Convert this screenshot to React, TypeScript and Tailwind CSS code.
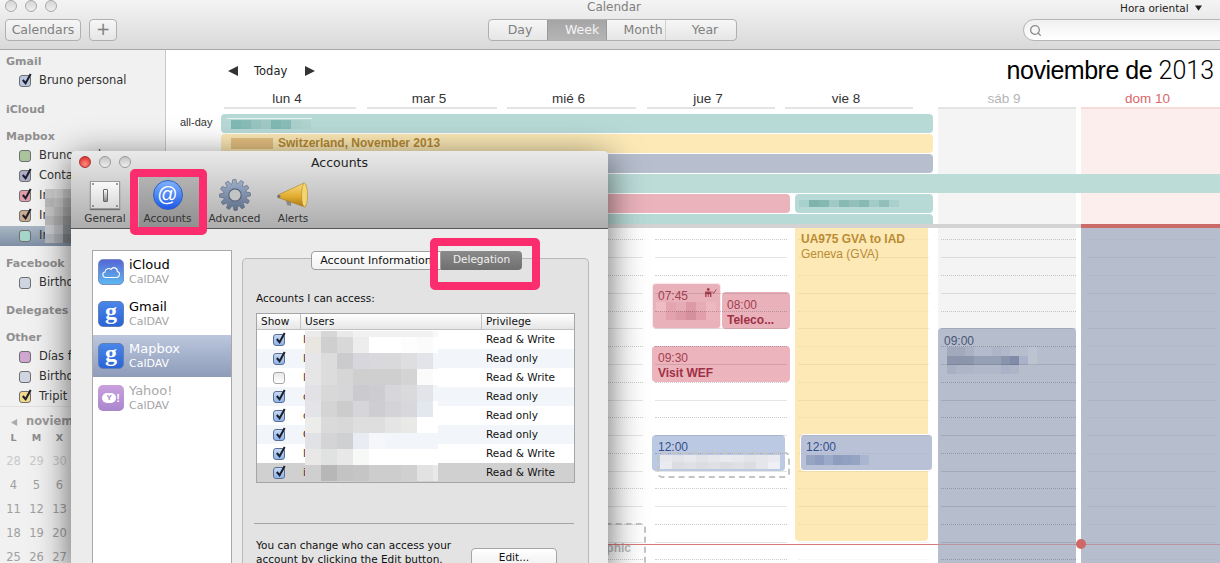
import React from 'react';
import { Search } from 'lucide-react';

const sidebar = "font-['DejaVu_Sans',sans-serif]";

function Mosaic({ rows, w, h, firstH, lastW, className }: { rows: string[][]; w: number; h: number; firstH?: number; lastW?: number; className?: string }) {
  return (
    <div className={className}>
      {rows.map((row, i) => (
        <div key={i} className="flex">
          {row.map((c, j) => (
            <div
              key={j}
              style={{
                width: lastW && j === row.length - 1 ? lastW : w,
                height: firstH && i === 0 ? firstH : h,
                background: c,
              }}
            />
          ))}
        </div>
      ))}
    </div>
  );
}

function Check({ className }: { className?: string }) {
  return (
    <svg viewBox="0 0 14 14" className={className}>
      <path d="M3 7.5 L6 11 L11.5 1" fill="none" stroke="#1c1f2b" strokeWidth="2.2" />
    </svg>
  );
}

function CalBox({ color, checked }: { color: string; checked?: boolean }) {
  return (
    <div
      className="relative w-[12px] h-[12px] shrink-0 rounded-[3px] border border-[#6f6f6f]"
      style={{ background: color }}
    >
      {checked && <Check className="absolute -top-[3px] left-0 w-[13px] h-[13px]" />}
    </div>
  );
}

function SideHead({ label, className }: { label: string; className: string }) {
  return <div className={`h-[19px] pl-[6px] leading-[19px] text-[11px] font-bold text-[#8f8f8f] ${className}`}>{label}</div>;
}

function SideItem({ label, color, checked, selected }: { label: string; color: string; checked?: boolean; selected?: boolean }) {
  return (
    <div className={`h-[20px] pl-[19px] flex items-center gap-[8px] text-[11.5px] text-[#333] whitespace-nowrap ${selected ? 'bg-gradient-to-b from-[#a9b6c4] to-[#7f8fa3]' : ''}`}>
      <CalBox color={color} checked={checked} />
      <span>{label}</span>
    </div>
  );
}

const miniRows = [
  ['28', '29', '30', '31', '1', '2', '3'],
  ['4', '5', '6', '7', '8', '9', '10'],
  ['11', '12', '13', '14', '15', '16', '17'],
  ['18', '19', '20', '21', '22', '23', '24'],
  ['25', '26', '27', '28', '29', '30', '1'],
];

function Sidebar() {
  return (
    <div className={`w-[166px] h-[513px] shrink-0 bg-[#f1f1f1] border-r border-[#c9c9c9] overflow-hidden pt-[2px] ${sidebar}`}>
      <SideHead label="Gmail" className="" />
      <SideItem label="Bruno personal" color="#b9c6e0" checked />
      <SideHead label="iCloud" className="mt-[9px]" />
      <SideHead label="Mapbox" className="mt-[8px]" />
      <SideItem label="Bruno work" color="#a9c49c" />
      <SideItem label="Contacts" color="#adadc8" checked />
      <SideItem label="Invites" color="#e29dab" checked />
      <SideItem label="Internal" color="#c9ab90" checked />
      <SideItem label="Infra" color="#a6d5ca" selected />
      <SideHead label="Facebook" className="mt-[8px]" />
      <SideItem label="Birthdays" color="#cfd6e2" />
      <SideHead label="Delegates" className="mt-[8px]" />
      <SideHead label="Other" className="mt-[8px]" />
      <SideItem label="Días festivos" color="#cfa7d0" />
      <SideItem label="Birthdays" color="#cfd6e2" />
      <SideItem label="Tripit" color="#f3d98b" checked />
      <div className="border-t border-[#e2e2e2] -mt-px" />
      <div className="mt-[7px] pl-[11px] h-[16px] flex items-center gap-[8px] text-[11.5px] font-bold text-[#999]">
        <svg viewBox="0 0 8 8" className="w-[7px] h-[7px]"><path d="M7 0 V8 L0 4 Z" fill="#aaa" /></svg>
        <span>noviembre</span>
      </div>
      <div className="pl-[2px] grid grid-cols-[repeat(7,23px)] text-center text-[9.5px] font-bold text-[#8c8c8c] h-[16px] leading-[16px]">
        {['L', 'M', 'X', 'J', 'V', 'S', 'D'].map((d) => <span key={d}>{d}</span>)}
      </div>
      {miniRows.map((r, i) => (
        <div key={i} className={`pl-[2px] grid grid-cols-[repeat(7,23px)] text-center text-[11.5px] h-[24px] leading-[24px] ${i === 0 ? 'mt-[3px] text-[#c9c9c9]' : 'text-[#a0a0a0]'}`}>
          {r.map((d, j) => <span key={j}>{d}</span>)}
        </div>
      ))}
    </div>
  );
}

function Toolbar() {
  return (
    <div className={`h-[50px] bg-gradient-to-b from-[#f4f4f4] to-[#d9d9d9] border-b border-[#a8a8a8] flex ${sidebar}`}>
      <div className="w-[488px] shrink-0">
        <div className="flex gap-[8px] pl-[5px] h-[19px]">
          {[0, 1, 2].map((i) => (
            <div key={i} className="w-[12px] h-[12px] rounded-full border border-[#a9a9a9] bg-gradient-to-b from-[#d6d6d6] to-[#eeeeee]" />
          ))}
        </div>
        <div className="flex gap-[8px] pl-[5px]">
          <div className="w-[76px] h-[22px] rounded-[4px] border border-[#b0b0b0] bg-gradient-to-b from-[#f6f6f6] to-[#e6e6e6] text-center leading-[20px] text-[12.5px] text-[#808080]">Calendars</div>
          <div className="w-[28px] h-[22px] rounded-[4px] border border-[#b0b0b0] bg-gradient-to-b from-[#f6f6f6] to-[#e6e6e6] text-center leading-[18px] text-[17px] text-[#808080]">+</div>
        </div>
      </div>
      <div className="w-[249px] shrink-0">
        <div className="h-[19px] text-center pl-[3px] text-[12px] leading-[15px] text-[#808080]">Calendar</div>
        <div className="flex h-[22px] rounded-[4px] border border-[#b0b0b0] bg-gradient-to-b from-[#f6f6f6] to-[#e6e6e6] text-[12.5px] text-[#808080] text-center leading-[20px] overflow-hidden">
          <div className="w-[58px] pl-[4px]">Day</div>
          <div className="w-[60px] pl-[10px] bg-gradient-to-b from-[#a5a5a5] to-[#b5b5b5] text-[#f4f4f4] border-x border-[#999]">Week</div>
          <div className="w-[59px] pl-[14px] border-r border-[#d0d0d0] whitespace-nowrap">Month</div>
          <div className="flex-1 pl-[8px]">Year</div>
        </div>
      </div>
      <div className="flex-1 pl-[286px]">
        <div className="h-[19px] pl-[97px] pt-[1px] flex items-start gap-[6px] text-[10.5px] leading-[14px] text-[#222] whitespace-nowrap">
          <span>Hora oriental</span>
          <svg viewBox="0 0 8 6" className="w-[7px] h-[6px] mt-[4px]"><path d="M0 0 H8 L4 6 Z" fill="#222" /></svg>
        </div>
        <div className="w-[210px] h-[22px] rounded-full border border-[#b5b5b5] bg-gradient-to-b from-[#f0f0f0] to-white flex items-center pl-[5px]">
          <Search className="w-[13px] h-[13px] text-[#8a8a8a]" strokeWidth={2.4} />
        </div>
      </div>
    </div>
  );
}

const dayCols = [
  { label: 'lun 4', cls: 'ml-[58px] w-[132px]', line: 'border-[#e4e4e4] text-[#333]' },
  { label: 'mar 5', cls: 'ml-[11px] w-[130px]', line: 'border-[#e4e4e4] text-[#333]' },
  { label: 'mié 6', cls: 'ml-[10px] w-[129px]', line: 'border-[#e4e4e4] text-[#333]' },
  { label: 'jue 7', cls: 'ml-[11px] w-[128px]', line: 'border-[#e4e4e4] text-[#333]' },
  { label: 'vie 8', cls: 'ml-[10px] w-[128px]', line: 'border-[#e4e4e4] text-[#333]' },
  { label: 'sáb 9', cls: 'ml-[25px] w-[138px]', line: 'border-[#e4e4e4] text-[#b5b5b5]' },
  { label: 'dom 10', cls: 'ml-[5px] w-[139px]', line: 'border-[#f5dcd9] text-[#d9686a]' },
];

// hour grid: solid every 35.6px from y=257, dotted half way between
const hourCols = [
  { left: 344, width: 133, faint: false },
  { left: 489, width: 132, faint: false },
  { left: 632, width: 132, faint: true },
  { left: 775, width: 135, faint: false },
  { left: 921, width: 129, faint: true },
];

function HourLines() {
  const lines = [];
  for (let i = 0; i < 10; i++) {
    const solid = 257.3 - 109 + i * 35.55;
    const dotted = solid - 17.9;
    for (const c of hourCols) {
      lines.push(
        <div key={`d${i}${c.left}`} className={`absolute border-t border-dotted ${c.faint ? 'border-black/5' : 'border-black/20'}`} style={{ top: Math.round(dotted), left: c.left, width: c.width }} />,
        <div key={`s${i}${c.left}`} className={`absolute h-px ${c.faint ? 'bg-black/5' : 'bg-black/10'}`} style={{ top: Math.round(solid), left: c.left, width: c.width }} />,
      );
    }
  }
  return <>{lines}</>;
}

function Calendar() {
  return (
    <div className="flex-1 min-w-0 font-['Liberation_Sans',Arial,sans-serif]">
      <div className="h-[38px] flex items-center">
        <div className="ml-[62px] flex items-center text-[12px] text-[#222] mt-[4px]">
          <svg viewBox="0 0 10 10" className="w-[10px] h-[10px]"><path d="M10 0 V10 L0 5 Z" fill="#333" /></svg>
          <span className="ml-[16px] mr-[18px] mt-[2px] font-['DejaVu_Sans',sans-serif] text-[11.5px]">Today</span>
          <svg viewBox="0 0 10 10" className="w-[10px] h-[10px]"><path d="M0 0 V10 L10 5 Z" fill="#333" /></svg>
        </div>
        <div className="ml-auto mr-[6px] mt-[3px] text-[25px] tracking-[-0.5px] text-black whitespace-nowrap">
          noviembre de <span className="font-['Roboto',sans-serif] font-light tracking-[0]">2013</span>
        </div>
      </div>
      <div className="flex h-[21px]">
        {dayCols.map((d) => (
          <div key={d.label} className={`${d.cls} ${d.line} shrink-0 border-b-2 pr-[6px] text-center text-[13.5px] leading-[21px]`}>{d.label}</div>
        ))}
      </div>
      <div className="relative h-[454px] overflow-hidden text-[12px]">
        <div className="absolute left-[772px] top-0 w-[143px] h-[454px] bg-[#f4f4f4]" />
        <div className="absolute left-[910px] top-0 w-[5px] h-[454px] bg-white" />
        <div className="absolute left-[915px] top-0 w-[139px] h-[115px] bg-[#fbeeec]" />
        <div className="absolute left-[915px] top-[119px] w-[139px] h-[335px] bg-[#b6bdcc]" />

        <div className="absolute left-[14px] top-[5px] text-[11px] text-[#333]">all-day</div>
        <div className="absolute left-[55px] top-[5px] w-[712px] h-[19px] rounded-[4px] bg-[#b8dad6]">
          <div className="absolute left-[6px] top-[4px] w-[85px] h-[1px] bg-[#e4f2f0]" />
          <Mosaic className="absolute left-[10px] top-[6px]" w={10} h={9} rows={[['#82b9b4', '#88bcb7', '#98c5c1', '#a0cac6', '#82b9b4', '#8abdb8', '#acd1cd', '#b0d4d0']]} />
        </div>
        <div className="absolute left-[55px] top-[25px] w-[712px] h-[19px] rounded-[4px] bg-[#fce9b6] pl-[57px] text-[12px] font-bold leading-[19px] text-[#b58a33]">
          <div className="absolute left-[10px] top-[4px] w-[42px] h-[11px] bg-[#e6c282]" />
          Switzerland, November 2013
        </div>
        <div className="absolute left-[55px] top-[45px] w-[712px] h-[19px] rounded-[4px] bg-[#b7bfce]" />
        <div className="absolute left-[55px] top-[65px] w-[999px] h-[19px] bg-[#b8dad6]/95" />
        <div className="absolute left-[55px] top-[85px] w-[569px] h-[19px] rounded-[4px] bg-[#ebb3bc]" />
        <div className="absolute left-[629px] top-[85px] w-[138px] h-[19px] rounded-[4px] bg-[#b8dad6]">
          <Mosaic className="absolute left-[4px] top-[6px]" w={10} h={7} rows={[['#a8d0cc', '#7fb3ad', '#86b8b2', '#a0c9c5', '#88b9b4', '#94c0bb', '#88b9b4', '#a2cbc7', '#92bfba', '#a9d0cc']]} />
        </div>
        <div className="absolute left-[55px] top-[105px] w-[712px] h-[14px] rounded-t-[4px] bg-[#b8dad6]" />

        <div className="absolute left-[629px] top-[115px] w-[133px] h-[317px] rounded-[4px] bg-[#fce9b6] pt-[8px] pl-[6px] leading-[15px] text-[#bb8c34]">
          <div className="font-bold text-[12px]">UA975 GVA to IAD</div>
          <div className="text-[12px]">Geneva (GVA)</div>
        </div>
        <div className="absolute left-0 top-[115px] w-[915px] h-[4px] bg-[#d3d3d3]" />
        <div className="absolute left-[915px] top-[115px] w-[139px] h-[4px] bg-[#cc6a68]" />

        <div className="absolute left-[486px] top-[174px] w-[69px] h-[46px] rounded-[4px] bg-[#e9b2bb] border border-white/70 pl-[5px] pt-[5px] text-[#a43f50] leading-[15px]">
          <div className="text-[12px]">07:45</div>
          <svg viewBox="0 0 14 10" className="absolute right-[3px] top-[4px] w-[13px] h-[9px]">
            <circle cx="4.5" cy="1.7" r="1.6" fill="#a43f50" />
            <path d="M1 4 H8 V10 H6.5 V7 H5 V10 H4 V7 H2.5 V10 H1 Z" fill="#a43f50" />
            <path d="M9 4 L10.5 6 L13.5 1.5" fill="none" stroke="#a43f50" strokeWidth="1" />
          </svg>
          <Mosaic className="absolute left-[3px] top-[18px]" w={10} h={9} rows={[['#efbcc4', '#e5a5b0', '#e7abb5', '#dd9aa6', '#e7abb5', '#eeb8c1'], ['#e9b2bb', '#e2a3ae', '#dd9aa6', '#d68f9c', '#e29fab', '#ebb3bc']]} />
        </div>
        <div className="absolute left-[556px] top-[183px] w-[68px] h-[37px] rounded-[4px] bg-[#e9b2bb] pl-[5px] pt-[6px] text-[#a43f50] leading-[15px] whitespace-nowrap">
          <div className="text-[12px]">08:00</div>
          <div className="font-bold text-[12px] text-[#9e3146]">Teleco...</div>
        </div>
        <div className="absolute left-[486px] top-[237px] w-[138px] h-[36px] rounded-[4px] bg-[#ecb4bc] pl-[6px] pt-[5px] text-[#a43f50] leading-[15px]">
          <div className="text-[12px]">09:30</div>
          <div className="font-bold text-[12px] text-[#9e3146]">Visit WEF</div>
        </div>
        <div className="absolute left-[486px] top-[326px] w-[133px] h-[36px] rounded-[4px] bg-[#bcc9e2] pl-[6px] pt-[5px] leading-[15px] text-[#35508e]">12:00</div>
        <div className="absolute left-[634px] top-[325px] w-[133px] h-[37px] rounded-[4px] bg-[#b8c1d6] border border-white pl-[5px] pt-[5px] leading-[15px] text-[#35508e]">
          12:00
          <Mosaic className="absolute left-[5px] top-[20px]" w={9} h={10} rows={[['#97a5c3', '#8f9ec0', '#9caaca', '#8e9cbe', '#90a0c0', '#95a4c2', '#aab6cf']]} />
        </div>
        <div className="absolute left-[772px] top-[219px] w-[138px] h-[235px] rounded-t-[4px] bg-[#b6bdcc] pl-[6px] pt-[6px] text-[#4a5678] leading-[15px]">
          09:00
          <Mosaic className="absolute left-[9px] top-[19px]" w={9} h={9} rows={[['#a1a9bd', '#a1a9bd', '#a9b1c3', '#b2bacb', '#b2bacb', '#adb5c6', '#b0b8c9', '#b6bdcc', '#b6bdcc', '#bcc3d1'], ['#8b96ad', '#8b96ad', '#8b96ad', '#95a0b5', '#95a0b5', '#95a0b5', '#8893ac', '#7f8ba8', '#a9b2c8', '#bcc3d1'], ['#a8b0c3', '#adb5c7', '#adb5c7', '#b0b8c9', '#b0b8c9', '#b0b8c9', '#a9b2c6', '#adb5c7', '#b6bdcc', '#b6bdcc']]} />
        </div>

        <HourLines />

        <div className="absolute left-[491px] top-[343px] w-[133px] h-[26px] rounded-[5px] border-2 border-dashed border-[#c4c4c4] p-[1px]">
          <Mosaic w={12} h={7} rows={[['#e6e8ee', '#e2e4ea', '#e6e8ee', '#e0e2e8', '#e4e6ec', '#e8eaf0', '#e6e8ee', '#e2e4ea', '#e4e6ec', '#e8eaf0'], ['#e9ebf0', '#dcdde2', '#dfe0e5', '#dcdde2', '#dee0e4', '#dcdde2', '#dee0e4', '#dcdde2', '#e4e6ec', '#eef0f5']]} />
        </div>
        <div className="absolute left-[344px] top-[414px] w-[136px] h-[40px] rounded-t-[5px] border-2 border-b-0 border-dashed border-[#c4c4c4] pt-[16px] pr-[13px] text-right font-bold text-[12px] leading-[15px] text-[#bdbdbd]">
          Infographic
        </div>

        <div className="absolute left-[442px] top-[435px] w-[330px] h-px bg-[#d97a7a]" />
        <div className="absolute left-[772px] top-[435px] w-[282px] h-px bg-[#b9939f]" />
        <div className="absolute left-[910px] top-[430px] w-[10px] h-[10px] rounded-full bg-[#cf6766]" />
      </div>
    </div>
  );
}

function Gear() {
  const pts: string[] = [];
  const teeth = 12;
  for (let i = 0; i < teeth; i++) {
    const a = (i / teeth) * Math.PI * 2;
    const s = (Math.PI * 2) / teeth;
    const seq: [number, number][] = [[11.5, -0.5], [15.5, -0.28], [15.5, 0.12], [11.5, 0.3]];
    for (const [r, o] of seq) {
      pts.push(`${16 + r * Math.cos(a + o * s)},${16 + r * Math.sin(a + o * s)}`);
    }
  }
  return (
    <svg viewBox="0 0 32 32" className="w-[32px] h-[32px]">
      <defs>
        <linearGradient id="gearFill" x1="0" y1="0" x2="0" y2="1">
          <stop offset="0" stopColor="#9fb0cb" />
          <stop offset="1" stopColor="#5f6f8a" />
        </linearGradient>
      </defs>
      <polygon points={pts.join(' ')} fill="url(#gearFill)" stroke="#55627a" strokeWidth="0.6" />
      <circle cx="16" cy="16" r="6.2" fill="#c4c4c4" stroke="#56637b" strokeWidth="1.2" />
    </svg>
  );
}

function Megaphone() {
  return (
    <svg viewBox="0 0 32 26" className="w-[32px] h-[26px]">
      <defs>
        <linearGradient id="hornFill" x1="0" y1="0" x2="0" y2="1">
          <stop offset="0" stopColor="#f7dc82" />
          <stop offset="0.55" stopColor="#e2ad2f" />
          <stop offset="1" stopColor="#a97a17" />
        </linearGradient>
      </defs>
      <path d="M9 18 L10 23 L14 24 L14 20 Z" fill="#8a8a8a" />
      <path d="M1 13 L27 1 C29 6 29 19 28 25 L2 16 Z" fill="url(#hornFill)" stroke="#9a7418" strokeWidth="0.5" />
      <ellipse cx="27.5" cy="13" rx="3" ry="12" fill="#f3d372" stroke="#a97a17" strokeWidth="0.5" />
      <circle cx="1.8" cy="14.5" r="1.7" fill="#777" />
    </svg>
  );
}

function SwitchIcon() {
  return (
    <div className="relative w-[30px] h-[28px] bg-gradient-to-b from-[#fafafa] to-[#d8d8d8] border border-[#9a9a9a] shadow-[0_1px_1px_rgba(0,0,0,0.4)]">
      <div className="absolute left-[1px] top-[1px] w-[2px] h-[2px] rounded-full bg-[#777]" />
      <div className="absolute right-[1px] top-[1px] w-[2px] h-[2px] rounded-full bg-[#777]" />
      <div className="absolute left-[1px] bottom-[1px] w-[2px] h-[2px] rounded-full bg-[#777]" />
      <div className="absolute right-[1px] bottom-[1px] w-[2px] h-[2px] rounded-full bg-[#777]" />
      <div className="absolute left-[12px] top-[7px] w-[5px] h-[13px] rounded-[1px] bg-gradient-to-b from-[#fff] to-[#888] border border-[#666]" />
    </div>
  );
}

function AtIcon() {
  return (
    <div className="w-[30px] h-[30px] rounded-full bg-gradient-to-b from-[#7fb0fa] to-[#1e58e6] border border-[#2f5fc0] flex items-center justify-center text-[20px] leading-none text-white font-['Liberation_Sans',sans-serif]">
      <span className="-mt-[2px]">@</span>
    </div>
  );
}

function CloudIcon() {
  return (
    <div className="w-[26px] h-[26px] shrink-0 rounded-[5px] bg-gradient-to-b from-[#5566d6] to-[#5cb8ee] border border-[#7b8cc8] flex items-center justify-center">
      <svg viewBox="0 0 24 16" className="w-[20px] h-[14px]">
        <path d="M6 14.5 C1.5 14.5 0.8 9 4.8 8 C5 4 10 2.5 12 5 C14.5 1 20 3 19.5 7.5 C23.5 8.5 23 14.5 18.5 14.5 Z" fill="none" stroke="#fff" strokeWidth="1.3" />
      </svg>
    </div>
  );
}

function GoogleIcon() {
  return (
    <div className="w-[26px] h-[26px] shrink-0 rounded-[5px] bg-gradient-to-b from-[#4a86e8] to-[#2a63d8] border border-[#5f7fb5] flex items-center justify-center text-[24px] leading-none text-white font-['Liberation_Serif',serif] font-bold">
      <span className="-mt-[6px]">g</span>
    </div>
  );
}

function YahooIcon() {
  return (
    <div className="w-[26px] h-[26px] shrink-0 rounded-[5px] bg-gradient-to-b from-[#c9a0de] to-[#a987cd] flex items-center justify-center font-['Liberation_Sans',sans-serif] font-bold text-white">
      <span className="w-[14px] h-[10px] rounded-full bg-white text-[#a987cd] text-[8px] leading-[10px] text-center">Y</span>
      <span className="text-[11px] leading-none">!</span>
    </div>
  );
}

const accounts = [
  { name: 'iCloud', icon: <CloudIcon /> },
  { name: 'Gmail', icon: <GoogleIcon /> },
  { name: 'Mapbox', icon: <GoogleIcon />, selected: true },
  { name: 'Yahoo!', icon: <YahooIcon />, muted: true },
];

const delegates = [
  { letter: 'l', show: true, priv: 'Read & Write' },
  { letter: 'l', show: true, priv: 'Read only' },
  { letter: 'l', show: false, priv: 'Read & Write' },
  { letter: 'c', show: true, priv: 'Read only' },
  { letter: 'c', show: true, priv: 'Read only' },
  { letter: 'C', show: true, priv: 'Read only' },
  { letter: 'l', show: true, priv: 'Read & Write' },
  { letter: 'i', show: true, priv: 'Read & Write' },
];

const userBlur = [
  ['#ebebeb', '#d6d6d6', '#e9e9e9', '#f1f1f1', '#f1f1f1', '#f1f1f1', '#f1f1f1', '#f1f1f1', '#f8f8f8'],
  ['#e9e5e1', '#cfcfcf', '#d8d8d8', '#ededed', '#ffffff', '#ffffff', '#fdfdfd', '#fbfbfb', '#ffffff'],
  ['#e6e6e9', '#dcdcdc', '#cbcbce', '#d6d6dc', '#d9d9dd', '#d9d9dc', '#dedee1', '#e3e4e9', '#f2f5fa'],
  ['#e6e6e6', '#dcdcdc', '#d6d6d6', '#cfcfd0', '#cfcfd0', '#cfcfd0', '#d4d4d4', '#fbfbfb', '#ffffff'],
  ['#e2e2e6', '#d8d8d8', '#d6d6d8', '#cbcbcf', '#cdcdd1', '#d7d7db', '#dadadd', '#e3e4e9', '#f2f5fa'],
  ['#e4e4e8', '#d4d4d4', '#cccccc', '#d5d5da', '#cdcdd2', '#d4d4d8', '#d8d8dc', '#e3e7ef', '#ffffff'],
  ['#ececea', '#dadada', '#d8d8d8', '#dedede', '#dedede', '#e5e5e5', '#e9e9e7', '#ffffff', '#ffffff'],
  ['#e0e2e6', '#d4d4d6', '#cfd0d2', '#e9edf3', '#f5f7fb', '#f2f5fa', '#f2f5fa', '#f2f5fa', '#f2f5fa'],
  ['#e9e8e6', '#e0e2e2', '#e8e8e8', '#f7f9f7', '#ffffff', '#ffffff', '#ffffff', '#ffffff', '#ffffff'],
  ['#cfcfcf', '#b7b7b7', '#c3c3c3', '#c5c5c5', '#cdcdcd', '#cdcdcd', '#d0d0d0', '#e2e2e2', '#e9e9e9'],
];

function AccountsWindow() {
  return (
    <div className={`absolute left-[71px] top-[151px] w-[537px] h-[420px] rounded-t-[5px] bg-[#ececec] shadow-[0_8px_36px_rgba(0,0,0,0.62)] flex flex-col ${sidebar}`}>
      <div className="h-[78px] shrink-0 rounded-t-[5px] bg-gradient-to-b from-[#eaeaea] to-[#adadad] border-b border-[#555] relative">
        <div className="flex gap-[8px] pl-[8px] pt-[5px] h-[24px]">
          <div className="w-[12px] h-[12px] rounded-full bg-[radial-gradient(circle_at_50%_70%,#ff8a80,#d81e1e)] border border-[#a33]" />
          <div className="w-[12px] h-[12px] rounded-full bg-gradient-to-b from-[#c4c4c4] to-[#eeeeee] border border-[#999]" />
          <div className="w-[12px] h-[12px] rounded-full bg-gradient-to-b from-[#c4c4c4] to-[#eeeeee] border border-[#999]" />
        </div>
        <div className="absolute left-0 right-0 top-[4px] text-center text-[12.5px] text-[#222] leading-[15px]">Accounts</div>
        <div className="flex h-[53px] text-[10.5px] text-[#333] text-center">
          <div className="w-[68px] shrink-0 flex flex-col items-center">
            <div className="h-[36px] pt-[4px] flex items-center"><SwitchIcon /></div>
            <div className="leading-[14px]">General</div>
          </div>
          <div className="w-[60px] shrink-0 flex flex-col items-center pr-[3px] bg-gradient-to-b from-[#b5b5b5] to-[#8f8f8f]">
            <div className="h-[36px] pt-[4px] flex items-center"><AtIcon /></div>
            <div className="leading-[14px]">Accounts</div>
          </div>
          <div className="w-[71px] shrink-0 flex flex-col items-center">
            <div className="h-[36px] pt-[4px] flex items-center"><Gear /></div>
            <div className="leading-[14px]">Advanced</div>
          </div>
          <div className="w-[46px] shrink-0 flex flex-col items-center">
            <div className="h-[36px] pt-[4px] flex items-center"><Megaphone /></div>
            <div className="leading-[14px]">Alerts</div>
          </div>
        </div>
      </div>

      <div className="flex-1 flex pl-[21px] pt-[21px] gap-[10px] min-h-0">
        <div className="w-[140px] shrink-0 bg-white border border-[#a8a8a8] border-b-0">
          {accounts.map((a) => (
            <div key={a.name} className={`h-[42px] flex items-center gap-[5px] pl-[5px] ${a.selected ? 'bg-gradient-to-b from-[#bcc7dd] to-[#8e9cba]' : ''}`}>
              {a.icon}
              <div className="leading-[15px]">
                <div className={`text-[13px] ${a.selected ? 'text-white' : a.muted ? 'text-[#aaa]' : 'text-black'}`}>{a.name}</div>
                <div className={`text-[11px] ${a.selected ? 'text-white' : 'text-[#a5a5a5]'}`}>CalDAV</div>
              </div>
            </div>
          ))}
        </div>

        <div className="w-[347px] shrink-0 mt-[8px] rounded-t-[5px] border border-[#b9b9b9] border-b-0 bg-[#e3e3e3]">
          <div className="-mt-[8px] ml-[68px] flex h-[19px] w-[211px] rounded-[4px] text-[11px] leading-[17px] text-center">
            <div className="w-[130px] rounded-l-[4px] bg-gradient-to-b from-white to-[#f2f2f2] border border-[#9e9e9e] text-[#111] whitespace-nowrap">Account Information</div>
            <div className="w-[81px] rounded-r-[4px] bg-gradient-to-b from-[#8b8b8b] to-[#6f6f6f] text-[10.5px] text-[#f0f0f0]">Delegation</div>
          </div>
          <div className="mt-[21px] ml-[13px] text-[10.5px] leading-[14px] text-[#111]">Accounts I can access:</div>
          <div className="relative mt-[8px] ml-[13px] w-[319px] border border-[#a5a5a5] bg-white text-[10.5px] text-[#111]">
            <div className="h-[16px] flex leading-[15px] border-b border-[#c2c2c2] bg-gradient-to-b from-white to-[#e6e6e6]">
              <div className="w-[44px] pl-[4px] border-r border-[#c2c2c2]">Show</div>
              <div className="w-[181px] pl-[4px] border-r border-[#c2c2c2]">Users</div>
              <div className="pl-[4px]">Privilege</div>
            </div>
            {delegates.map((d, i) => (
              <div key={i} className={`h-[19px] flex items-center ${i === 7 ? 'bg-[#d0d0d0]' : i % 2 ? 'bg-[#f2f6fa]' : 'bg-white'}`}>
                <div className="w-[44px] flex justify-center">
                  <div className={`relative w-[12px] h-[12px] rounded-[3px] border ${d.show ? 'border-[#5a6f96] bg-gradient-to-b from-[#c4d8f4] to-[#8fb4ea]' : 'border-[#a5a5a5] bg-gradient-to-b from-[#e8e8e8] to-white'}`}>
                    {d.show && <Check className="absolute -top-[3px] left-0 w-[13px] h-[13px]" />}
                  </div>
                </div>
                <div className="w-[181px] pl-[2px] text-[#5a2a20]">{d.letter}</div>
                <div className="pl-[4px] text-[#111] whitespace-nowrap">{d.priv}</div>
              </div>
            ))}
            <Mosaic className="absolute left-[48px] top-[17px]" w={16} h={16} firstH={6} lastW={5} rows={userBlur} />
          </div>
          <div className="mt-[40px] ml-[11px] w-[320px] h-px bg-[#a5a5a5]" />
          <div className="mt-[14px] ml-[13px] flex text-[10.5px] leading-[14px] text-[#111]">
            <div className="w-[215px] whitespace-nowrap">
              You can change who can access your<br />account by clicking the Edit button.
            </div>
            <div className="w-[86px] h-[24px] mt-[10px] rounded-[4px] border border-[#a5a5a5] bg-gradient-to-b from-white to-[#ececec] text-center leading-[16px]">Edit...</div>
          </div>
        </div>
      </div>
    </div>
  );
}

export default function App() {
  return (
    <div className="relative w-[1220px] h-[563px] overflow-hidden bg-white">
      <Toolbar />
      <div className="flex">
        <Sidebar />
        <Calendar />
      </div>
      <Mosaic
        className="absolute left-[45px] top-[189px]"
        w={9}
        h={9}
        rows={[['#ccc', '#d5d5d5', '#c9c9c9'], ['#bdbdbd', '#c7c7c7', '#b5b5b5'], ['#c8c8c8', '#bdbdbd', '#aaa'], ['#bbb', '#b0b0b0', '#999'], ['#c9cbd0', '#b9bcc0', '#909498'], ['#b5b9be', '#a9adb2', '#7e8388']]}
      />
      <AccountsWindow />
      <div className="absolute left-[130px] top-[169px] w-[77px] h-[66px] rounded-[5px] border-[8px] border-[#fb2d6e]" />
      <div className="absolute left-[430px] top-[238px] w-[110px] h-[52px] rounded-[5px] border-[8px] border-[#fb2d6e]" />
    </div>
  );
}
